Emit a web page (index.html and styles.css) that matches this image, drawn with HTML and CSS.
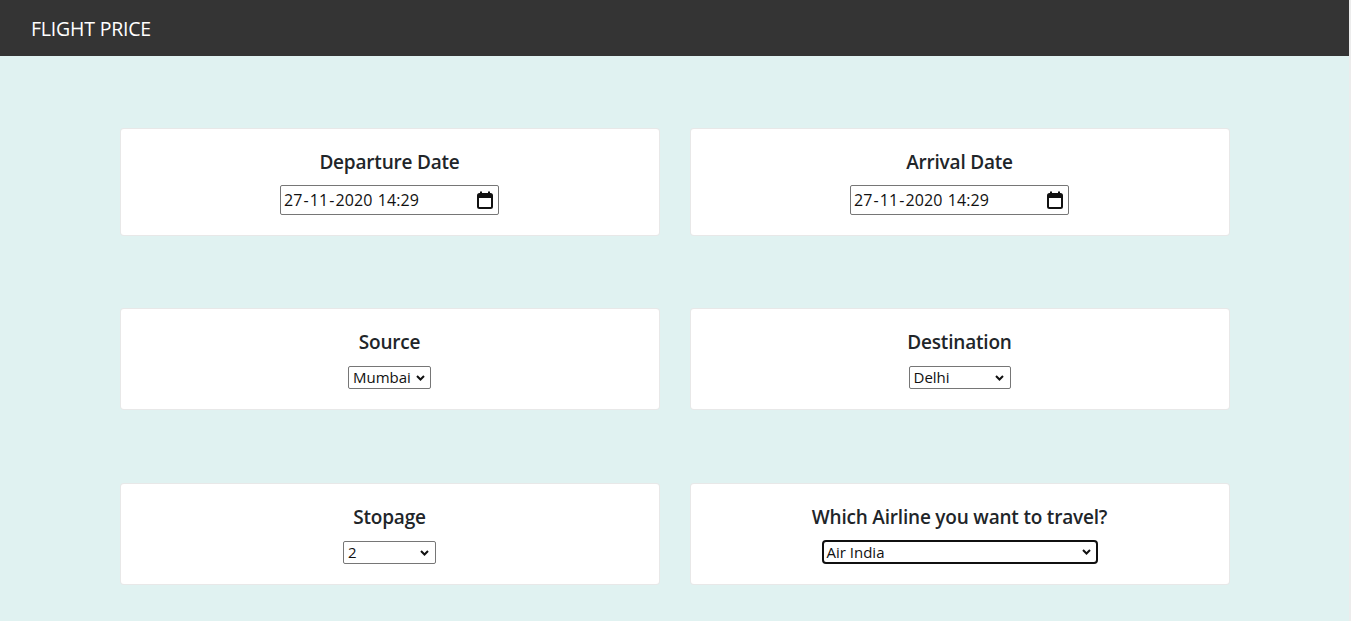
FILE: index.html
```html
<!DOCTYPE html>
<html lang="en">
<head>
<meta charset="utf-8">
<title>Flight Price</title>
<link rel="stylesheet" href="styles.css">
</head>
<body>
<nav class="navbar">
  <span class="brand">FLIGHT PRICE</span>
</nav>
<main class="container">
  <div class="row row-first">
    <div class="col">
      <div class="card">
        <h5 class="card-title">Departure Date</h5>
        <div class="field">
          <div class="date-input">
            <span class="date-text">27<span class="sep">-</span>11<span class="sep">-</span>2020 14:29</span>
            <svg class="cal" width="16" height="18" viewBox="0 0 16 18">
              <rect x="1" y="3" width="14" height="14" rx="1.5" fill="none" stroke="#111" stroke-width="2"/>
              <rect x="1" y="3" width="14" height="4" fill="#111"/>
              <rect x="3" y="0.5" width="2" height="3" fill="#111"/>
              <rect x="11" y="0.5" width="2" height="3" fill="#111"/>
            </svg>
          </div>
        </div>
      </div>
    </div>
    <div class="col">
      <div class="card">
        <h5 class="card-title">Arrival Date</h5>
        <div class="field">
          <div class="date-input">
            <span class="date-text">27<span class="sep">-</span>11<span class="sep">-</span>2020 14:29</span>
            <svg class="cal" width="16" height="18" viewBox="0 0 16 18">
              <rect x="1" y="3" width="14" height="14" rx="1.5" fill="none" stroke="#111" stroke-width="2"/>
              <rect x="1" y="3" width="14" height="4" fill="#111"/>
              <rect x="3" y="0.5" width="2" height="3" fill="#111"/>
              <rect x="11" y="0.5" width="2" height="3" fill="#111"/>
            </svg>
          </div>
        </div>
      </div>
    </div>
  </div>

  <div class="row row-second">
    <div class="col">
      <div class="card">
        <h5 class="card-title">Source</h5>
        <div class="field field-select">
          <div class="select select-source">
            <span>Mumbai</span>
            <svg class="chev" width="9" height="6" viewBox="0 0 9 6"><path d="M1 1 L4.5 4.5 L8 1" fill="none" stroke="#111" stroke-width="2"/></svg>
          </div>
        </div>
      </div>
    </div>
    <div class="col">
      <div class="card">
        <h5 class="card-title">Destination</h5>
        <div class="field field-select">
          <div class="select select-dest">
            <span>Delhi</span>
            <svg class="chev" width="9" height="6" viewBox="0 0 9 6"><path d="M1 1 L4.5 4.5 L8 1" fill="none" stroke="#111" stroke-width="2"/></svg>
          </div>
        </div>
      </div>
    </div>
  </div>

  <div class="row row-third">
    <div class="col">
      <div class="card">
        <h5 class="card-title">Stopage</h5>
        <div class="field field-select">
          <div class="select select-stop">
            <span>2</span>
            <svg class="chev" width="9" height="6" viewBox="0 0 9 6"><path d="M1 1 L4.5 4.5 L8 1" fill="none" stroke="#111" stroke-width="2"/></svg>
          </div>
        </div>
      </div>
    </div>
    <div class="col">
      <div class="card">
        <h5 class="card-title">Which Airline you want to travel?</h5>
        <div class="field field-airline">
          <div class="select select-airline">
            <span>Air India</span>
            <svg class="chev" width="9" height="6" viewBox="0 0 9 6"><path d="M1 1 L4.5 4.5 L8 1" fill="none" stroke="#111" stroke-width="2"/></svg>
          </div>
        </div>
      </div>
    </div>
  </div>
</main>
</body>
</html>
```

FILE: styles.css
```css
* {
  box-sizing: border-box;
}

html {
  background: #ececec;
}

body {
  margin: 0 2px 0 0;
  min-height: 100vh;
  background: #e0f2f1;
  font-family: "Open Sans", "Noto Sans", sans-serif;
  font-size: 16px;
  line-height: 1.5;
  color: #212529;
}

.navbar {
  height: 56px;
  background: #343434;
  display: flex;
  align-items: center;
  padding: 0 31px;
}

.brand {
  color: #fff;
  font-size: 19.5px;
  letter-spacing: -0.2px;
  line-height: 30px;
  padding-top: 2px;
}

.container {
  width: 1140px;
  margin: 0 auto;
  padding: 0 15px;
}

.row {
  display: flex;
  margin: 0 -15px;
}

.row-first {
  margin-top: 72px;
}

.row-second {
  margin-top: 72px;
}

.row-third {
  margin-top: 73px;
}

.col {
  flex: 0 0 50%;
  padding: 0 15px;
}

.card {
  background: #fff;
  border: 1px solid rgba(0, 0, 0, 0.09);
  border-radius: 4px;
  padding: 20px;
  text-align: center;
}

.card-title {
  margin: 1px 0 11px;
  font-size: 19px;
  font-weight: 600;
  line-height: 24px;
  letter-spacing: -0.2px;
}

.field {
  display: flex;
  justify-content: center;
}

.field-select {
  padding-top: 1px;
}

.date-input {
  width: 219px;
  height: 30px;
  border: 1px solid #767676;
  border-radius: 2px;
  display: flex;
  align-items: center;
  justify-content: space-between;
  padding: 0 5px 0 3px;
  color: #111;
  font-size: 16px;
}

.date-text {
  letter-spacing: 0.1px;
  word-spacing: 1px;
}

.sep {
  margin: 0 1px;
}

.cal {
  display: block;
}

.select {
  height: 23px;
  border: 1px solid #767676;
  border-radius: 2px;
  display: flex;
  align-items: center;
  justify-content: space-between;
  padding: 0 6px 0 4px;
  color: #111;
  font-size: 15px;
  text-align: left;
}

.chev {
  display: block;
}

.select-source {
  width: 83px;
  padding-right: 5px;
}

.select-dest {
  width: 102px;
}

.select-stop {
  width: 93px;
}

.select-airline {
  width: 276px;
  height: 24px;
  border: 2px solid #101010;
  border-radius: 4px;
  padding: 0 5px 0 3px;
}
```
